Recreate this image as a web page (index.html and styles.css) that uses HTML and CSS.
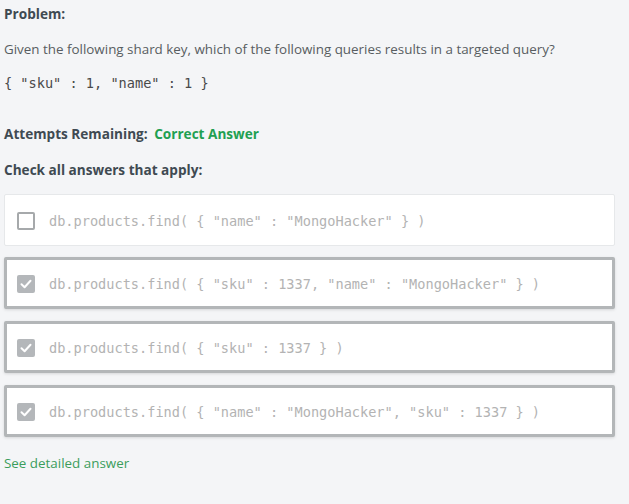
FILE: index.html
```html
<!DOCTYPE html>
<html>
<head>
<meta charset="utf-8">
<link rel="stylesheet" href="styles.css">
</head>
<body>
<div class="page">
  <div class="label title">Problem:</div>
  <p class="prose">Given the following shard key, which of the following queries results in a targeted query?</p>
  <div class="mono key">{ "sku" : 1, "name" : 1 }</div>
  <div class="label attempts">Attempts Remaining: <span class="ok">Correct Answer</span></div>
  <div class="label check">Check all answers that apply:</div>
  <div class="answers">
    <div class="card">
      <span class="box"></span>
      <span class="mono opt">db.products.find( { "name" : "MongoHacker" } )</span>
    </div>
    <div class="card sel">
      <span class="box on"><svg viewBox="0 0 18 18" width="18" height="18"><path d="M4.5 9.3 L7.6 12.2 L13.5 5.8" fill="none" stroke="#fff" stroke-width="2" stroke-linecap="round" stroke-linejoin="round"/></svg></span>
      <span class="mono opt">db.products.find( { "sku" : 1337, "name" : "MongoHacker" } )</span>
    </div>
    <div class="card sel">
      <span class="box on"><svg viewBox="0 0 18 18" width="18" height="18"><path d="M4.5 9.3 L7.6 12.2 L13.5 5.8" fill="none" stroke="#fff" stroke-width="2" stroke-linecap="round" stroke-linejoin="round"/></svg></span>
      <span class="mono opt">db.products.find( { "sku" : 1337 } )</span>
    </div>
    <div class="card sel">
      <span class="box on"><svg viewBox="0 0 18 18" width="18" height="18"><path d="M4.5 9.3 L7.6 12.2 L13.5 5.8" fill="none" stroke="#fff" stroke-width="2" stroke-linecap="round" stroke-linejoin="round"/></svg></span>
      <span class="mono opt">db.products.find( { "name" : "MongoHacker", "sku" : 1337 } )</span>
    </div>
  </div>
  <a class="more" href="#">See detailed answer</a>
</div>
</body>
</html>
```
FILE: styles.css
```css
html, body {
  margin: 0;
  padding: 0;
  background: #f4f5f7;
}
.page {
  padding: 5px 14px 20px 4px;
  font-family: "Open Sans", "Liberation Sans", Arial, sans-serif;
  color: #555;
}
.label {
  font-weight: 700;
  font-size: 13.6px;
  line-height: 18px;
  color: #3f4a52;
}
.prose {
  margin: 17px 0 0;
  font-size: 13.4px;
  line-height: 18px;
  color: #585d61;
}
.mono {
  font-family: "DejaVu Sans Mono", "Liberation Mono", monospace;
  font-size: 13.6px;
}
.key {
  margin-top: 16px;
  line-height: 18px;
  color: #4a4a4a;
}
.attempts {
  margin-top: 33px;
}
.ok {
  color: #1fa052;
  margin-left: 3px;
}
.check {
  margin-top: 18px;
}
.answers {
  margin-top: 15px;
  display: flex;
  flex-direction: column;
  gap: 11px;
}
.card {
  box-sizing: border-box;
  width: 611px;
  height: 52px;
  display: flex;
  align-items: center;
  gap: 14px;
  padding-left: 12px;
  padding-top: 2px;
  background: #fff;
  border: 1px solid #e6e8ea;
  border-radius: 2px;
}
.card.sel {
  border: 3px solid #b3b6b8;
  padding-left: 10px;
  box-shadow: 0 1px 3px rgba(0,0,0,0.12);
}
.card.sel + .card.sel {
  margin-top: 1px;
}
.box {
  box-sizing: border-box;
  width: 18px;
  height: 18px;
  flex: none;
  border: 2px solid #a6a9ab;
  border-radius: 2px;
  display: flex;
}
.box.on {
  border: none;
  background: #b4b7ba;
}
.opt {
  color: #b3b3b3;
  line-height: 18px;
  white-space: pre;
}
.more {
  display: block;
  margin-top: 17px;
  font-size: 13.4px;
  line-height: 18px;
  color: #3b9d5c;
  text-decoration: none;
}
```
